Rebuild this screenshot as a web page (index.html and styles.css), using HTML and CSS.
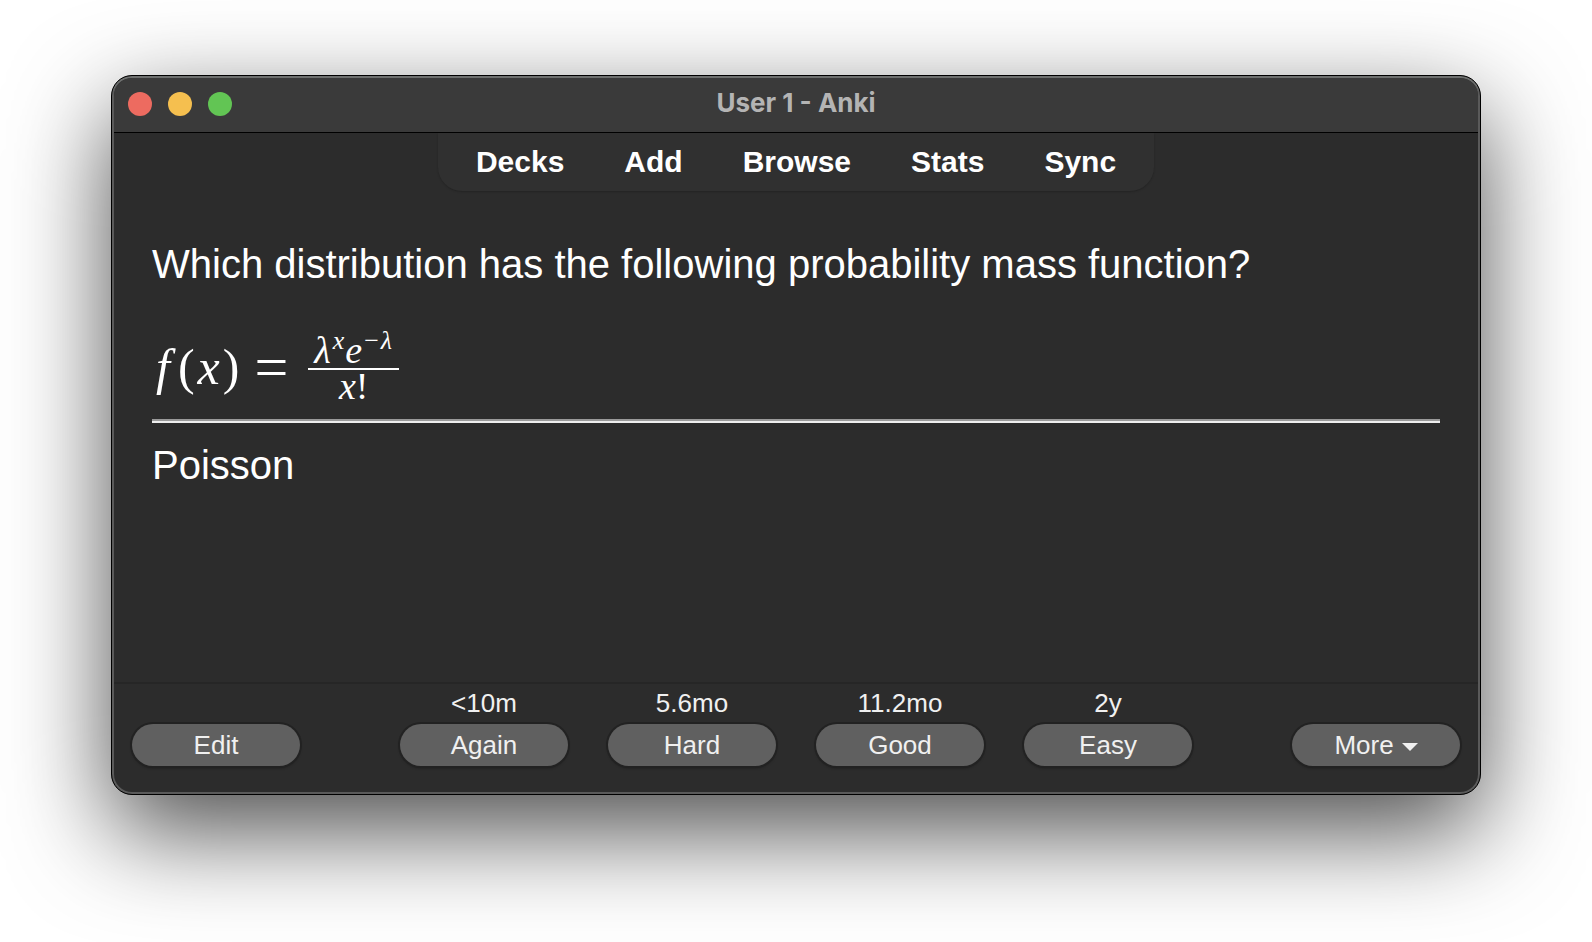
FILE: index.html
```html
<!DOCTYPE html>
<html lang="en">
<head>
<meta charset="utf-8">
<title>User 1 - Anki</title>
<link rel="stylesheet" href="styles.css">
</head>
<body>
<main class="window">
  <header class="titlebar">
    <div class="lights">
      <button class="light close" aria-label="Close"></button>
      <button class="light minimize" aria-label="Minimize"></button>
      <button class="light zoom" aria-label="Zoom"></button>
    </div>
    <h1 class="title">User 1 - Anki</h1>
  </header>
  <nav class="nav">
    <a href="#decks">Decks</a>
    <a href="#add">Add</a>
    <a href="#browse">Browse</a>
    <a href="#stats">Stats</a>
    <a href="#sync">Sync</a>
  </nav>
  <section class="card">
    <p class="question">Which distribution has the following probability mass function?</p>
    <div class="formula">
      <span class="fn"><i>f</i></span><span class="paren">(</span><span class="arg"><i>x</i></span><span class="paren">)</span><span class="equals">=</span>
      <span class="fraction">
        <span class="numerator"><i>λ</i><sup><i>x</i></sup><i>e</i><sup><span class="minus">−</span><i>λ</i></sup></span>
        <span class="denominator"><i>x</i>!</span>
      </span>
    </div>
    <hr class="divider">
    <p class="answer">Poisson</p>
  </section>
  <footer class="toolbar">
    <button class="btn">Edit</button>
    <div class="grades">
      <div class="grade"><span id="t1">&lt;10m</span><button class="btn" aria-describedby="t1">Again</button></div>
      <div class="grade"><span id="t2">5.6mo</span><button class="btn" aria-describedby="t2">Hard</button></div>
      <div class="grade"><span id="t3">11.2mo</span><button class="btn" aria-describedby="t3">Good</button></div>
      <div class="grade"><span id="t4">2y</span><button class="btn" aria-describedby="t4">Easy</button></div>
    </div>
    <button class="btn more">More
      <svg class="caret" viewBox="0 0 16 8" aria-hidden="true"><path d="M0 0H16L8 8Z" fill="currentColor"/></svg>
    </button>
  </footer>
</main>
</body>
</html>
```
FILE: styles.css
```css
* { box-sizing: border-box; }

body {
  margin: 0;
  min-height: 100vh;
  padding: 75px 111px 147px;
  display: flex;
  background: #fff;
  color: #fff;
  font-family: "Liberation Sans", Arial, sans-serif;
  overflow: hidden;
}

p, h1 { margin: 0; }

.window {
  flex: 1;
  display: flex;
  flex-direction: column;
  border: 1px solid #000;
  border-radius: 21px;
  padding: 2px;
  background: #2c2c2c;
  box-shadow:
    inset 0 2px 0 #6e706f,
    inset 0 0 0 2px #5a5a5a,
    0 36px 100px rgba(0, 0, 0, 0.7);
}

.titlebar {
  display: grid;
  grid-template-columns: 1fr auto 1fr;
  align-items: center;
  height: 55px;
  padding: 0 14px 2px;
  background: #3a3a3a;
  border-bottom: 1px solid #000;
  border-radius: 18px 18px 0 0;
}

.lights { display: flex; gap: 16px; }

.light {
  width: 24px;
  height: 24px;
  padding: 0;
  border: 0;
  border-radius: 50%;
}

.close { background: #ed6b60; }
.minimize { background: #f5bf4f; }
.zoom { background: #62c554; }

.title {
  padding-bottom: 2px;
  font: 700 26px/30px Inter, "Liberation Sans", sans-serif;
  color: #b4b4b4;
}

.nav {
  align-self: center;
  display: flex;
  gap: 60px;
  padding: 12px 38px;
  background: #303030;
  border-radius: 0 0 24px 24px;
  box-shadow: 0 1px 2px rgba(0, 0, 0, 0.2);
}

.nav a {
  color: #fff;
  font-size: 30px;
  line-height: 34px;
  font-weight: 700;
  text-decoration: none;
}

.card {
  flex: 1;
  padding: 50px 38px 0;
  font-size: 40px;
  line-height: 46px;
}

.formula {
  display: flex;
  align-items: center;
  height: 100px;
  margin-top: 32px;
  padding-bottom: 4px;
  font-family: "Liberation Serif", "Times New Roman", serif;
  font-size: 50px;
}

.fn { padding: 0 8px 0 4px; }
.arg { padding: 0 3px; }

.equals {
  padding: 0 20px 0 15px;
  font-size: 60px;
}

.fraction {
  display: flex;
  flex-direction: column;
  font-size: 38px;
  text-align: center;
}

.numerator {
  padding: 0 6px;
  line-height: 36px;
  border-bottom: 2px solid #fff;
}

.denominator { line-height: 32px; }

.fraction sup {
  padding: 0 1px 0 2px;
  font-size: 26px;
  line-height: 0;
}

.minus { padding-right: 2px; }

.divider {
  margin: 0 0 19px;
  border: solid;
  border-color: #9a9a9a #eee #eee #9a9a9a;
  border-width: 2px 0;
}

.toolbar {
  display: flex;
  align-items: flex-end;
  justify-content: space-between;
  padding: 4px 18px 26px;
  border-top: 2px solid #262626;
  font-size: 26px;
  line-height: 30px;
  color: #f0f0f0;
}

.grades { display: flex; gap: 40px; }

.grade {
  display: flex;
  flex-direction: column;
  align-items: center;
  gap: 6px;
}

.btn {
  width: 168px;
  height: 42px;
  padding: 0;
  border: 0;
  border-radius: 22px;
  background: #606060;
  color: #f0f0f0;
  font: inherit;
  box-shadow: 0 0 0 2px #222, 0 2px 3px rgba(0, 0, 0, 0.4);
}

.more {
  display: flex;
  align-items: center;
  justify-content: center;
  gap: 8px;
}

.caret {
  width: 16px;
  height: 8px;
  margin-top: 4px;
}
```
